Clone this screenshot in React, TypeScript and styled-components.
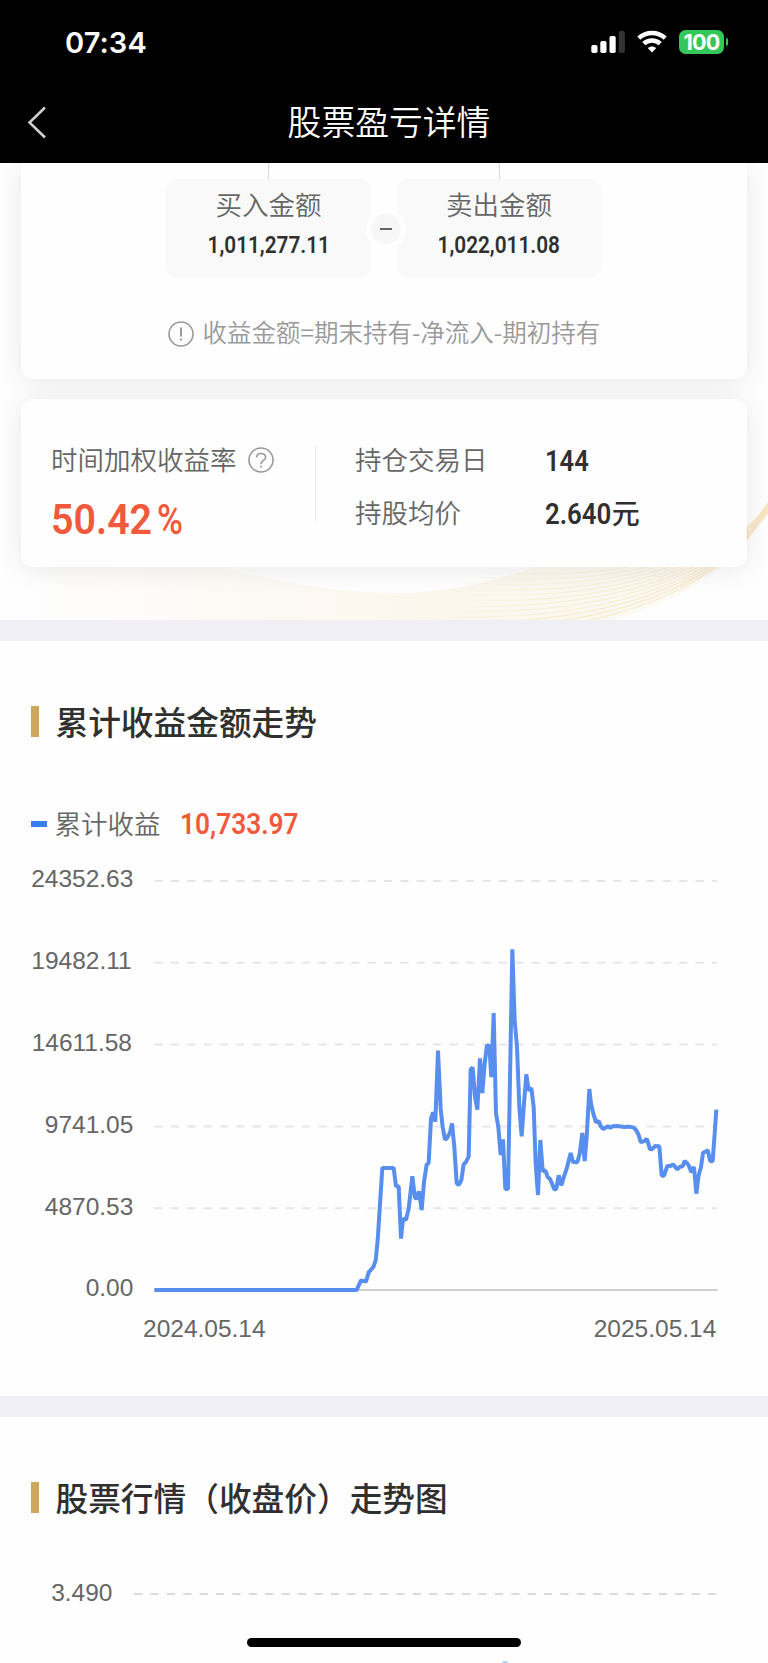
import React from "react";
import styled, { createGlobalStyle } from "styled-components";

const cjk = '"Noto Sans CJK SC", sans-serif';

const GlobalStyle = createGlobalStyle`
  * { box-sizing: border-box; }
  body {
    margin: 0;
    background: #fff;
    font-family: ${cjk};
  }
`;

const Page = styled.div`
  position: relative;
  width: 768px;
  height: 1663px;
  overflow: hidden;
  background: #fefefe;
`;

const Header = styled.header`
  height: 163px;
  background: #000;
  color: #fff;
`;

const StatusBar = styled.div`
  display: flex;
  justify-content: space-between;
  align-items: center;
  height: 84px;
  padding: 0 40px 0 65px;
`;

const Clock = styled.span`
  padding-top: 1px;
  font: 600 29px/36px Inter, sans-serif;
  letter-spacing: 0.1px;
`;

const StatusIcons = styled.div`
  display: flex;
  align-items: center;
  gap: 12px;
`;

const Battery = styled.div`
  position: relative;
  display: flex;
  align-items: center;
  justify-content: center;
  width: 45px;
  height: 24px;
  margin-right: 4px;
  border-radius: 6.5px;
  background: #34c759;
  font: 700 21.5px/24px Inter, sans-serif;
  letter-spacing: -0.7px;

  &::after {
    content: "";
    position: absolute;
    right: -4px;
    top: 8px;
    width: 2.5px;
    height: 8px;
    border-radius: 0 3px 3px 0;
    background: #34c759;
  }
`;

const NavBar = styled.div`
  display: grid;
  grid-template-columns: 60px 1fr 50px;
  align-items: center;
  height: 77px;
`;

const BackIcon = styled.svg`
  width: 22px;
  height: 34px;
  margin: 0 0 1px 26px;
`;

const NavTitle = styled.h1`
  margin: 0;
  padding-bottom: 4px;
  text-align: center;
  font-size: 33.8px;
  font-weight: 350;
  line-height: 44px;
`;

const Hero = styled.section`
  position: relative;
  height: 457px;
  padding: 0 21px 0 20.5px;
  overflow: hidden;
`;

const Ribbon = styled.svg`
  position: absolute;
  left: 0;
  top: 317px;
  width: 768px;
  height: 140px;
`;

const Card = styled.div`
  position: relative;
  border-radius: 12px;
  background: #fefefe;
  box-shadow: 0 2px 28px rgba(0, 0, 0, 0.085);
`;

const AmountCard = styled(Card)`
  height: 215.5px;
  margin-bottom: 20.5px;
  border-radius: 0 0 12px 12px;
`;

const TileRow = styled.div`
  display: flex;
  justify-content: center;
  gap: 26px;
`;

const TileColumn = styled.div`
  display: flex;
  flex-direction: column;
  align-items: center;
  width: 204.5px;
`;

const Connector = styled.div`
  width: 1px;
  height: 16px;
  background: #d9d9d9;
`;

const Tile = styled.div`
  display: flex;
  flex-direction: column;
  align-items: center;
  gap: 8px;
  width: 100%;
  height: 99px;
  padding-top: 8px;
  border-radius: 12px;
  background: #f9f9f9;
`;

const Label = styled.span`
  padding-bottom: 2px;
  color: #666;
  font-size: 26.5px;
  font-weight: 350;
  line-height: 34px;
  white-space: nowrap;
`;

const Figure = styled.span<{ $size: number; $scale?: number; $weight?: number; $accent?: boolean }>`
  display: inline-block;
  font-family: Roboto, ${cjk};
  font-size: ${(p) => p.$size}px;
  font-weight: ${(p) => p.$weight ?? 600};
  line-height: 1.2;
  color: ${(p) => (p.$accent ? "#f0593b" : "#303030")};
  white-space: nowrap;
  transform: scaleX(${(p) => p.$scale ?? 0.9});
  transform-origin: left center;

  ${Tile} & {
    transform-origin: center;
  }
`;

const PriceValue = styled.div`
  display: flex;
  align-items: center;
`;

const Unit = styled.span`
  margin-left: -7px;
  padding-bottom: 2px;
  color: #303030;
  font-size: 28px;
  font-weight: 500;
  line-height: 34px;
`;

const MinusBadge = styled.div`
  position: absolute;
  left: 345.5px;
  top: 46px;
  display: flex;
  align-items: center;
  justify-content: center;
  width: 40px;
  height: 40px;
  border: 5px solid #fefefe;
  border-radius: 50%;
  background: #f7f7f7;

  &::after {
    content: "";
    width: 12px;
    height: 2px;
    background: #666;
  }
`;

const Hint = styled.div`
  display: flex;
  align-items: center;
  gap: 9px;
  height: 35px;
  margin: 38px 0 0 147px;
  color: #999;
  font-size: 24.5px;
  font-weight: 350;
  line-height: 34px;
  white-space: nowrap;
`;

const HintText = styled.span`
  padding-bottom: 3px;
`;

const CircleIcon = styled.svg`
  width: 26px;
  height: 26px;
  flex: none;
`;

const RateCard = styled(Card)`
  display: flex;
  height: 168px;
  padding: 43px 0 0 30.5px;
`;

const RateBlock = styled.div`
  width: 264px;
`;

const RateHead = styled.div`
  display: flex;
  align-items: center;
  gap: 11px;
`;

const RateValue = styled.div`
  display: flex;
  align-items: baseline;
  margin-top: 16px;

  ${Figure} + ${Figure} {
    margin-left: -4px;
  }
`;

const Divider = styled.div`
  width: 1px;
  height: 76px;
  margin-top: 3px;
  background: #ececec;
`;

const Stats = styled.div`
  display: grid;
  grid-template-columns: 190px auto;
  grid-auto-rows: 36px;
  row-gap: 17px;
  align-content: start;
  align-items: center;
  padding-left: 39px;

  ${Figure} {
    padding-top: 2px;
  }
`;

const Band = styled.div`
  height: 20.5px;
  background: #f0eff5;
`;

const TrendSection = styled.section`
  height: 755.5px;
  padding-top: 58px;
`;

const PriceSection = styled.section`
  padding-top: 58px;
`;

const SectionTitle = styled.h2`
  display: flex;
  align-items: center;
  gap: 16.5px;
  height: 44px;
  margin: 0 0 1px 31px;
  color: #303030;
  font-size: 32.7px;
  font-weight: 500;
  line-height: 44px;

  &::before {
    content: "";
    width: 8px;
    height: 31px;
    margin-top: 2px;
    background: #cea660;
  }
`;

const Legend = styled.div`
  display: flex;
  align-items: center;
  height: 38px;
  margin: 62px 0 0 31px;

  &::before {
    content: "";
    width: 16px;
    height: 6px;
    margin-right: 7.5px;
    background: #3a7df0;
  }

  ${Label} {
    margin-right: 19.5px;
  }

  ${Figure} {
    padding-top: 2px;
  }
`;

const Chart = styled.svg`
  display: block;
  width: 768px;
  font-family: "Liberation Sans", Arial, sans-serif;
`;

const HomeIndicator = styled.div`
  position: absolute;
  left: 247px;
  top: 1637.5px;
  width: 274px;
  height: 9px;
  border-radius: 5px;
  background: #000;
`;

// Each tick carries the right edge of its label.
const yTicks = [
  { label: "24352.63", edge: 400 },
  { label: "19482.11", edge: 395 },
  { label: "14611.58", edge: 396 },
  { label: "9741.05", edge: 400 },
  { label: "4870.53", edge: 400 },
  { label: "0.00", edge: 400 },
];

// Cumulative profit curve; three units make one pixel of the plot.
const curve: [number, number][] = [
  [463, 1259], [1070, 1259], [1083, 1230], [1098, 1234], [1106, 1206], [1120, 1190], [1127, 1170],
  [1133, 1110], [1147, 893], [1181, 893], [1188, 948], [1196, 948], [1203, 1105], [1209, 1046],
  [1218, 1048], [1226, 1015], [1237, 918], [1245, 984], [1251, 984], [1257, 963], [1265, 1019],
  [1272, 935], [1280, 883], [1286, 878], [1293, 745], [1299, 726], [1306, 754], [1314, 541],
  [1322, 715], [1328, 770], [1335, 808], [1342, 802], [1350, 786], [1356, 759], [1363, 830],
  [1370, 938], [1376, 944], [1384, 930], [1391, 882], [1398, 875], [1406, 858], [1412, 598],
  [1418, 591], [1425, 680], [1432, 718], [1440, 564], [1447, 668], [1454, 580], [1461, 524],
  [1468, 528], [1474, 620], [1481, 428], [1488, 730], [1495, 770], [1502, 854], [1509, 807],
  [1516, 956], [1524, 956], [1537, 237], [1544, 450], [1551, 530], [1558, 710], [1565, 798],
  [1572, 700], [1579, 612], [1586, 661], [1594, 653], [1601, 710], [1607, 880], [1614, 974],
  [1621, 809], [1628, 902], [1636, 900], [1643, 920], [1650, 926], [1657, 942], [1663, 958],
  [1669, 955], [1676, 915], [1684, 945], [1692, 918], [1700, 895], [1712, 848], [1719, 875],
  [1732, 876], [1739, 850], [1747, 788], [1754, 872], [1760, 800], [1768, 656], [1773, 700],
  [1780, 730], [1788, 756], [1796, 752], [1803, 769], [1810, 776], [1824, 768], [1831, 772],
  [1838, 768], [1852, 767], [1873, 770], [1887, 769], [1901, 772], [1909, 780], [1916, 794],
  [1922, 815], [1931, 813], [1941, 806], [1950, 837], [1957, 836], [1965, 827], [1978, 828],
  [1985, 916], [1992, 916], [2002, 887], [2011, 887], [2019, 882], [2032, 897], [2040, 889],
  [2048, 888], [2054, 872], [2061, 878], [2067, 887], [2074, 906], [2082, 890], [2089, 970],
  [2096, 915], [2103, 890], [2109, 848], [2116, 844], [2123, 840], [2131, 873], [2138, 872],
  [2144, 790], [2149, 718],
];

const ribbonLines = Array.from({ length: 12 }, (_, i) => i);

function SignalIcon() {
  return (
    <svg width="34" height="24" viewBox="0 0 34 24">
      <rect x="0.3" y="15" width="6.2" height="8" rx="1.8" fill="#fff" />
      <rect x="9.3" y="11" width="6.2" height="12" rx="1.8" fill="#fff" />
      <rect x="18.5" y="6" width="6.2" height="17" rx="1.8" fill="#fff" />
      <rect x="27.7" y="1" width="6.2" height="22" rx="1.8" fill="#333" />
    </svg>
  );
}

function WifiIcon() {
  return (
    <svg width="30" height="24" viewBox="0 0 30 24">
      <g fill="none" stroke="#fff" strokeWidth="4.4">
        <path d="M1.8 8.1 C9.2 1.3 20.8 1.3 28.2 8.1" />
        <path d="M6.8 13.7 C11.4 9.5 18.6 9.5 23.2 13.7" />
      </g>
      <path d="M10.7 18.1 C13.2 15.8 16.8 15.8 19.3 18.1 L15 22.6 Z" fill="#fff" />
    </svg>
  );
}

export default function App() {
  return (
    <Page>
      <GlobalStyle />
      <Header>
        <StatusBar>
          <Clock>07:34</Clock>
          <StatusIcons>
            <SignalIcon />
            <WifiIcon />
            <Battery>100</Battery>
          </StatusIcons>
        </StatusBar>
        <NavBar>
          <BackIcon viewBox="0 0 22 34">
            <path d="M19 2.5 L3.5 17.5 L19 32.5" fill="none" stroke="#d0d0d0" strokeWidth="2.5" />
          </BackIcon>
          <NavTitle>股票盈亏详情</NavTitle>
        </NavBar>
      </Header>

      <Hero>
        <Ribbon viewBox="0 480 768 140">
          <defs>
            <linearGradient id="veil" x1="0" x2="1">
              <stop offset="0" stopColor="#f8ecd4" stopOpacity="0" />
              <stop offset="0.6" stopColor="#f8ecd4" stopOpacity="0.42" />
              <stop offset="1" stopColor="#f8ecd4" stopOpacity="0.2" />
            </linearGradient>
            <linearGradient id="thread" gradientUnits="userSpaceOnUse" x1="430" x2="768" y1="0" y2="0">
              <stop offset="0" stopColor="#f0c878" stopOpacity="0" />
              <stop offset="0.4" stopColor="#f0c878" stopOpacity="0.7" />
              <stop offset="1" stopColor="#f0c878" stopOpacity="1" />
            </linearGradient>
          </defs>
          <path
            d="M20 560 L200 560 C290 588 350 593 400 593 C460 592 500 580 555 560 L722 566 Q680 602 612 620 L20 620 Z"
            fill="url(#veil)"
          />
          <g fill="none" strokeWidth="1.2">
            {ribbonLines.map((i) => (
              <path
                key={i}
                stroke="url(#thread)"
                opacity={0.2 + i * 0.022}
                d={`M${470 - i * 6} ${571 + i * 5.6} C${540} ${577 + i * 5.6} ${650 + i * 2} ${580 + i * 3.5} ${748} ${526 + i * 1.2}`}
              />
            ))}
            {ribbonLines.slice(0, 9).map((i) => (
              <path
                key={i}
                stroke="#f0c878"
                opacity="0.3"
                d={`M744 ${529 + i * 1.8} Q758 ${519 + i * 0.8} 768 ${502 + i * 1.4}`}
              />
            ))}
          </g>
        </Ribbon>

        <AmountCard>
          <TileRow>
            <TileColumn>
              <Connector />
              <Tile>
                <Label>买入金额</Label>
                <Figure $size={24} $scale={0.865}>1,011,277.11</Figure>
              </Tile>
            </TileColumn>
            <TileColumn>
              <Connector />
              <Tile>
                <Label>卖出金额</Label>
                <Figure $size={24} $scale={0.865}>1,022,011.08</Figure>
              </Tile>
            </TileColumn>
          </TileRow>
          <MinusBadge />
          <Hint>
            <CircleIcon viewBox="0 0 26 26" fill="none" stroke="#999" strokeWidth="1.6">
              <circle cx="13" cy="13" r="12" />
              <path d="M13 6.5 V15.5 M13 17.6 V19.6" strokeWidth="1.9" />
            </CircleIcon>
            <HintText>收益金额=期末持有-净流入-期初持有</HintText>
          </Hint>
        </AmountCard>

        <RateCard>
          <RateBlock>
            <RateHead>
              <Label>时间加权收益率</Label>
              <CircleIcon viewBox="0 0 26 26" fill="none" stroke="#999" strokeWidth="1.6">
                <circle cx="13" cy="13" r="12" />
                <path d="M8.6 10.6 C8.6 5.2 17.6 5.2 17.6 10.4 C17.6 13.6 13 13.4 13 17.2 M13 18.8 V20.8" />
              </CircleIcon>
            </RateHead>
            <RateValue>
              <Figure $size={43} $scale={0.915} $accent>50.42</Figure>
              <Figure $size={43} $scale={0.82} $weight={500} $accent>%</Figure>
            </RateValue>
          </RateBlock>
          <Divider />
          <Stats>
            <Label>持仓交易日</Label>
            <Figure $size={28.7} $scale={0.89}>144</Figure>
            <Label>持股均价</Label>
            <PriceValue>
              <Figure $size={28.7}>2.640</Figure>
              <Unit>元</Unit>
            </PriceValue>
          </Stats>
        </RateCard>
      </Hero>

      <Band />

      <TrendSection>
        <SectionTitle>累计收益金额走势</SectionTitle>
        <Legend>
          <Label>累计收益</Label>
          <Figure $size={28.7} $scale={0.915} $accent>10,733.97</Figure>
        </Legend>
        <Chart height="500" viewBox="0 -82 2304 1500">
          <g stroke="#e6e6e6" strokeWidth="6" strokeDasharray="24.6 24.6">
            {yTicks.slice(0, -1).map((tick, i) => (
              <path key={tick.label} d={`M463 ${32 + i * 245.4} H2151`} />
            ))}
          </g>
          <path d="M463 1259 H2153" stroke="#d0d0d0" strokeWidth="6" />
          <polyline
            points={curve.map((p) => p.join(",")).join(" ")}
            fill="none"
            stroke="#588fee"
            strokeWidth="12"
            strokeLinejoin="bevel"
          />
          <g fill="#666" fontSize="73.5">
            {yTicks.map((tick, i) => (
              <text key={tick.label} x={tick.edge} y={51 + i * 245.4} textAnchor="end">
                {tick.label}
              </text>
            ))}
            <text x="429" y="1400">2024.05.14</text>
            <text x="2149" y="1400" textAnchor="end">2025.05.14</text>
          </g>
        </Chart>
      </TrendSection>

      <Band />

      <PriceSection>
        <SectionTitle>股票行情（收盘价）走势图</SectionTitle>
        <Chart height="143" viewBox="0 0 768 143">
          <text x="112.5" y="80.6" fontSize="24.5" fill="#666" textAnchor="end">
            3.490
          </text>
          <path d="M134 74 H717" stroke="#dadada" strokeWidth="2" strokeDasharray="8.2 8.2" />
          <circle cx="505" cy="144.5" r="3.4" fill="#a9ccfb" />
        </Chart>
      </PriceSection>

      <HomeIndicator />
    </Page>
  );
}
